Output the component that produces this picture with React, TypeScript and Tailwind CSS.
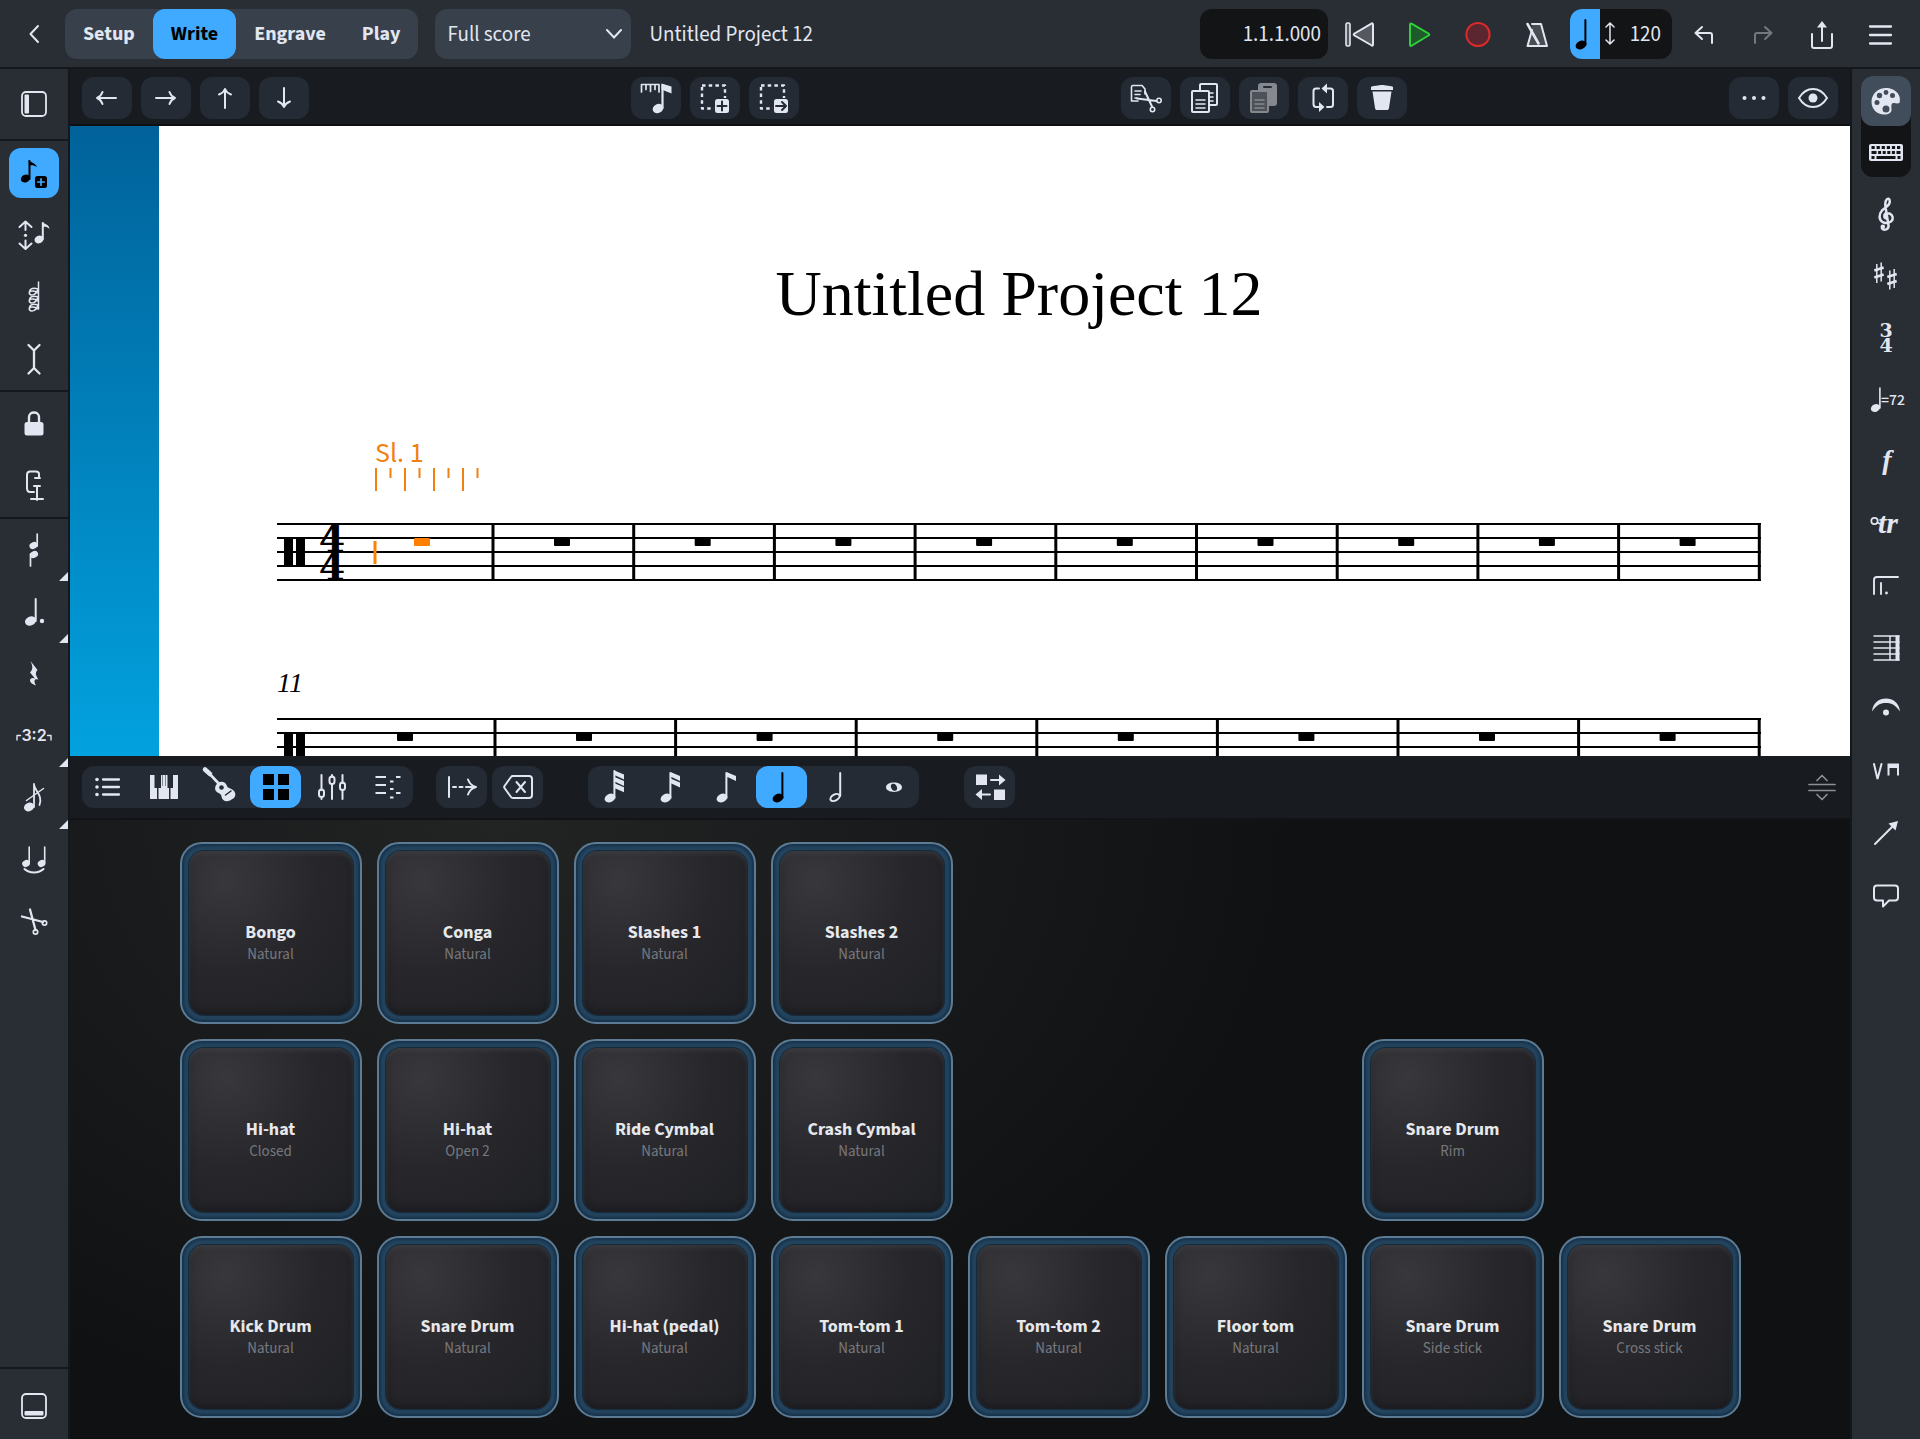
import type { ReactNode } from 'react';
import { clsx } from 'clsx';

type IconProps = { children: ReactNode; size?: string };

// every icon is drawn on a 32px grid
function Icon({ children, size = 'size-8' }: IconProps) {
  return (
    <svg
      viewBox="0 0 32 32"
      className={clsx('shrink-0 overflow-visible', size)}
      fill="none"
      stroke="currentColor"
      strokeWidth="2"
      strokeLinecap="round"
      strokeLinejoin="round"
      aria-hidden="true"
    >
      {children}
    </svg>
  );
}

const solid = { fill: 'currentColor', stroke: 'none' };

function NoteHead({ x, y, rx = 5, ry = 3.9 }: { x: number; y: number; rx?: number; ry?: number }) {
  return <ellipse cx={x} cy={y} rx={rx} ry={ry} transform={`rotate(-24 ${x} ${y})`} {...solid} />;
}

function Duration({ flags }: { flags: number }) {
  return (
    <Icon>
      <NoteHead x={12} y={27} rx={5.6} ry={4.2} />
      <path d={flags === 3 ? 'M16.4 0V27' : 'M16.4 2V27'} />
      {Array.from({ length: flags }, (_, i) => {
        const y = (flags === 3 ? -0.5 : 1) + i * 6.4;
        return <path key={i} d={`M16.4 ${y}L26 ${y + 4}V${y + 9}L16.4 ${y + 4.6}Z`} {...solid} />;
      })}
    </Icon>
  );
}

function Page({ x, y, muted }: { x: number; y: number; muted?: boolean }) {
  return (
    <>
      <rect x={x} y={y} width="17" height="21" rx="1" fill={muted ? '#4d5158' : '#252b35'} />
      <path d={`M${x + 4} ${y + 9}h9M${x + 4} ${y + 13}h9M${x + 4} ${y + 17}h9`} strokeWidth="1.6" />
    </>
  );
}

const icons = {
  back: <Icon><path d="M20 8L12.5 16L20 24" /></Icon>,
  rewind: (
    <Icon>
      <rect x="2" y="5" width="4" height="23" rx="1.5" fill="#55585e" strokeWidth="1.6" />
      <path d="M29 6.5V26.5C29 28 27.8 28 27 27L10.5 17.5C9.5 16.8 9.5 16.2 10.5 15.5L27 5.8C28 5 29 5.2 29 6.5Z" fill="#55585e" />
    </Icon>
  ),
  play: <Icon><path d="M7 6.5V27C7 28.2 8 28.2 9 27.5L25.5 17.5C26.5 16.8 26.5 16.2 25.5 15.5L9 5.8C8 5.2 7 5.3 7 6.5Z" fill="#1f5a2b" stroke="#2fd03a" /></Icon>,
  record: <Icon><circle cx="16" cy="16.5" r="11.6" fill="#5b2630" stroke="#d92b2b" /></Icon>,
  metronome: (
    <Icon>
      <path d="M11 6H20L26 28H6.5L11 12" fill="#484c53" />
      <path d="M6.5 6L17.5 25.5" strokeWidth="2.6" />
    </Icon>
  ),
  undo: <Icon><path d="M14 9L7.5 15L14 21M7.5 15H22C23 15 24 16 24 17V25" /></Icon>,
  redo: <Icon><path d="M18 9L24.5 15L18 21M24.5 15H10C9 15 8 16 8 17V25" /></Icon>,
  share: (
    <Icon>
      <path d="M6 16V28C6 29.5 6.5 30 8 30H24C25.5 30 26 29.5 26 28V16M16 23V8" />
      <path d="M11 9.5L16 3L21 9.5Z" {...solid} />
    </Icon>
  ),
  menu: <Icon><path d="M5 8.5H26M5 17H26M5 25.5H26" strokeWidth="2.3" /></Icon>,
  left: <Icon><path d="M25 16H6M11.5 10C10.5 13 8.5 15 6 16C8.5 17 10.5 19 11.5 22" /></Icon>,
  right: <Icon><path d="M6 16H25M19.5 10C20.5 13 22.5 15 25 16C22.5 17 20.5 19 19.5 22" /></Icon>,
  up: <Icon><path d="M16 26V7M10 12.5C13 11.5 15 9.5 16 7C17 9.5 19 11.5 22 12.5" /></Icon>,
  down: <Icon><path d="M16 6V25M10 19.5C13 20.5 15 22.5 16 25C17 22.5 19 20.5 22 19.5" /></Icon>,
  rhythm: (
    <Icon>
      <path d="M1.5 10V2.5H19V10M6 3V7.5M10.5 3V9.5M15 3V7.5" strokeWidth="1.7" />
      <NoteHead x={18} y={26.5} rx={5.5} ry={4.5} />
      <path d="M22.5 3V26" strokeWidth="2.2" />
      <path d="M21.5 1.5L31.5 4.5V11.5L21.5 7.5Z" {...solid} />
    </Icon>
  ),
  selectMore: (
    <Icon>
      <rect x="3" y="3.5" width="23" height="23" strokeDasharray="3.5 3.2" strokeWidth="2.4" strokeLinecap="butt" />
      <rect x="15" y="16" width="16" height="16" fill="#252b35" stroke="none" />
      <rect x="16" y="17" width="14" height="14" rx="2.5" {...solid} />
      <path d="M18.5 24H27.5M23 19.5V28.5" stroke="#252b35" />
    </Icon>
  ),
  selectEnd: (
    <Icon>
      <rect x="3" y="3.5" width="23" height="23" strokeDasharray="3.5 3.2" strokeWidth="2.4" strokeLinecap="butt" />
      <rect x="15" y="16" width="16" height="16" fill="#252b35" stroke="none" />
      <rect x="16" y="17" width="14" height="14" rx="2.5" {...solid} />
      <path d="M18 24H27.5M24 20L28 24L24 28" stroke="#252b35" />
    </Icon>
  ),
  cutPage: (
    <Icon>
      <path d="M15 12V7L12 3.5H3C2 3.5 1.5 4 1.5 5V19H8M5 9H11M5 12.5H10M5 16H7" strokeWidth="1.6" />
      <path d="M7 16.5L26.5 19M15 9.5L22 24.5" />
      <circle cx="29" cy="18.5" r="2.2" strokeWidth="1.6" />
      <circle cx="22.5" cy="27.5" r="2.2" strokeWidth="1.6" />
    </Icon>
  ),
  copy: <Icon><Page x={11} y={2} /><Page x={3} y={9} /></Icon>,
  paste: (
    <Icon>
      <rect x="11" y="2" width="17" height="21" rx="2" fill="currentColor" />
      <path d="M16 5H23" stroke="#252b35" />
      <Page x={3} y={9} muted />
    </Icon>
  ),
  repeat: (
    <Icon>
      <path d="M12 6.5H9C7.5 6.5 6.5 7.5 6.5 9V22C6.5 23.5 7.5 25 9 25H12M20 25H23.5C25 25 26 24 26 22.5V9C26 7.5 25 6.5 23.5 6.5H19" />
      <path d="M20 1.5V11.5L14.5 6.5ZM12 20V30L17.5 25Z" {...solid} />
    </Icon>
  ),
  trash: <Icon><path d="M5 5.5C5 4.5 6 4.2 8 4L12 3.5C13 2.8 19 2.8 20 3.5L24 4C26 4.2 27 4.5 27 5.5V8H5ZM6.5 9.5H25.5L23 26C22.8 27.5 22 28 21 28H11C10 28 9.2 27.5 9 26Z" {...solid} /></Icon>,
  dots: (
    <Icon>
      <circle cx="6.5" cy="16" r="2" {...solid} /><circle cx="16" cy="16" r="2" {...solid} /><circle cx="25.5" cy="16" r="2" {...solid} />
    </Icon>
  ),
  eye: (
    <Icon>
      <path d="M2 16C6 9.5 11 7 16 7C21 7 26 9.5 30 16C26 22.5 21 25 16 25C11 25 6 22.5 2 16Z" />
      <circle cx="16" cy="16" r="4.5" {...solid} />
    </Icon>
  ),
  sidebar: (
    <Icon>
      <rect x="4" y="4" width="24" height="24" rx="4" strokeWidth="1.8" />
      <rect x="6.5" y="6.5" width="4.5" height="19" rx="1" {...solid} />
    </Icon>
  ),
  drawer: (
    <Icon>
      <rect x="4" y="4" width="24" height="24" rx="4" strokeWidth="1.8" />
      <rect x="6.5" y="21" width="19" height="4.5" rx="1" {...solid} />
    </Icon>
  ),
  noteInput: (
    <Icon>
      <NoteHead x={7.5} y={21.5} rx={4.8} ry={3.8} />
      <path d="M11.5 4V22" />
      <path d="M10.5 3C13 6 17 5.5 19 10C16 8 14 8 11 8.5Z" {...solid} />
      <rect x="17" y="19" width="12" height="12" rx="2.5" {...solid} />
      <path d="M19.8 25H26.2M23 21.8V28.2" stroke="#3faaff" strokeWidth="1.7" />
    </Icon>
  ),
  pitch: (
    <Icon>
      <path d="M7.5 3V11M7.5 29.5V21.5M1.5 8L7.5 2.5L13.5 8M1.5 24.5L7.5 30L13.5 24.5" />
      <circle cx="7.5" cy="16.3" r="1.6" {...solid} />
      <NoteHead x={21} y={20.5} rx={4.6} ry={3.8} />
      <path d="M24.8 4V20" />
      <path d="M24 3C26 5 31 5 31.5 10C29 7.5 27 7.5 24 8Z" {...solid} />
    </Icon>
  ),
  chord: (
    <Icon>
      <path d="M20.5 1V28" strokeWidth="1.5" />
      {[11, 19, 27].map((y) => (
        <path
          key={y}
          d={`M20 ${y - 3}C19 ${y + 2} 13.5 ${y + 5} 11.3 ${y + 1.5}C10.5 ${y - 1} 16 ${y - 2.5} 20 ${y + 1}M11.5 ${y - 1}C13 ${y - 4} 17 ${y - 4} 20 ${y - 3}`}
          strokeWidth="1.5"
        />
      ))}
    </Icon>
  ),
  caret: <Icon><path d="M10.5 2L16 7.5L21.5 2M16 7.5V25M10.5 30.5L16 25L21.5 30.5" strokeWidth="2.3" /></Icon>,
  lock: (
    <Icon>
      <rect x="6.5" y="14" width="19" height="13.5" rx="2.5" {...solid} />
      <path d="M11 15V9C11 3 21 3 21 9V15" strokeWidth="2.4" />
    </Icon>
  ),
  clamp: <Icon><path d="M21 8V4C21 2 20 1.5 18 1.5H12C10 1.5 9 2.5 9 5V18C9 21 10 22 12 22H16M17 8H22M16 16H22M19 17V30M13 29H25" /></Icon>,
  voices: (
    <Icon>
      <NoteHead x={15.5} y={11.5} rx={4.2} ry={3.3} /><path d="M19.2 0V12" strokeWidth="1.7" />
      <NoteHead x={16} y={20.5} rx={4.2} ry={3.3} /><path d="M12.5 20V32" strokeWidth="1.7" />
    </Icon>
  ),
  dotted: (
    <Icon>
      <NoteHead x={12.5} y={25} rx={5.7} ry={4.5} />
      <path d="M17.7 3V25" />
      <circle cx="24" cy="25" r="2.2" {...solid} />
    </Icon>
  ),
  rest: <Icon><path d="M12.5 3L19.5 12C17 15 17.5 17 20.5 21.5C17 20.5 15 22 18 27.5C13 26 10.5 22.5 13 20.5C14.5 19.5 16 20 17 20.5L12 14.5C15 11.5 15 8.5 12.5 3Z" {...solid} /></Icon>,
  tuplet: (
    <Icon>
      <path d="M-1 20V15.5H2.5M29.5 15.5H33V20" strokeWidth="1.4" />
      <text x="16" y="21" textAnchor="middle" {...solid} className="font-['Inter',sans-serif] text-[16px] font-semibold">3:2</text>
    </Icon>
  ),
  grace: (
    <Icon>
      <NoteHead x={11} y={25} rx={5.2} ry={4.2} />
      <path d="M16 2V25M16 3C17 9 25 13 21.5 23" strokeWidth="1.8" />
      <path d="M8.5 18.5L25.5 6.5" strokeWidth="1.5" />
    </Icon>
  ),
  tie: (
    <Icon>
      <NoteHead x={8} y={19.5} rx={3.9} ry={3.4} /><path d="M11.2 3V19" strokeWidth="1.6" />
      <NoteHead x={23.5} y={19.5} rx={3.9} ry={3.4} /><path d="M26.7 3V19" strokeWidth="1.6" />
      <path d="M6.5 25C11 29.5 21 29.5 25.5 25" />
    </Icon>
  ),
  scissors: (
    <Icon>
      <path d="M4 10.5L25 16M12 3.5L17.5 24" strokeWidth="2.3" />
      <circle cx="26.5" cy="17" r="2.2" strokeWidth="1.7" />
      <circle cx="17.5" cy="26" r="2.2" strokeWidth="1.7" />
    </Icon>
  ),
  palette: (
    <Icon>
      <path d="M16 3C8 3 1.5 9 1.5 17C1.5 24 7 29.5 14 29.5C19 29.5 22 27.5 21.5 23.5C21 20 21.5 18 24 18C26 18 27 19 29.5 18C32 10 25 3 16 3Z" {...solid} />
      <g fill="#414d5a" stroke="none">
        <circle cx="16" cy="7.5" r="2.4" /><circle cx="9.5" cy="10.5" r="2.7" /><circle cx="22.5" cy="10.5" r="2.5" />
        <circle cx="7" cy="17.5" r="2.5" /><circle cx="16" cy="24" r="3.5" />
      </g>
    </Icon>
  ),
  keyboard: (
    <Icon>
      <rect x="-1" y="8" width="34" height="17" rx="2" {...solid} />
      <g stroke="#121416" strokeWidth="3" strokeLinecap="butt">
        <path d="M1.5 11.5H30.5" strokeDasharray="3.2 1.9" />
        <path d="M1.5 16.5H30.5" strokeDasharray="5 1.6 3 1.6 3 1.6 3 1.6 3 1.6 4 0" />
        <path d="M1.5 21.5H4.5M6.5 21.5H25.5M27.5 21.5H30.5" />
      </g>
    </Icon>
  ),
  clef: (
    <Icon>
      <path d="M16.5 20.5C13.5 20 13.5 15.5 17 15.2C21.5 15 23.5 18.5 22.5 21.5C21.5 24.5 17 26 13.5 24.5C8.5 22 8.5 16.5 12 12.5C15 9.5 20 7.5 19.8 3.5C19.8 .5 17.5 -.5 16 2.5C14.5 5.5 15.5 9 16 12L18.5 27.5C19 31.5 14 33 12 30.5" strokeWidth="2.5" />
      <circle cx="12.8" cy="28.8" r="2.3" {...solid} />
    </Icon>
  ),
  keySig: (
    <Icon>
      {[[9, 12.5], [22, 19]].map(([x, y]) => (
        <g key={x} strokeLinecap="butt">
          <path d={`M${x - 2.2} ${y - 8.5}V${y + 10.5}M${x + 2.2} ${y - 10}V${y + 9}`} strokeWidth="1.5" />
          <path d={`M${x - 4.7} ${y - 2}L${x + 4.7} ${y - 5}M${x - 4.7} ${y + 5}L${x + 4.7} ${y + 2}`} strokeWidth="2.8" />
        </g>
      ))}
    </Icon>
  ),
  timeSig: (
    <Icon>
      <text {...solid} textAnchor="middle" className="font-['DejaVu_Serif',serif] text-[19px] font-bold">
        <tspan x="16" y="15">3</tspan>
        <tspan x="16" y="30">4</tspan>
      </text>
    </Icon>
  ),
  tempo: (
    <Icon>
      <NoteHead x={5.5} y={24} rx={4.8} ry={3.7} />
      <path d="M9.9 4V24" strokeWidth="1.6" />
      <text x="11" y="21" {...solid} className="font-['Noto_Sans_CJK_SC',sans-serif] text-[14px] font-medium">=72</text>
    </Icon>
  ),
  dynamics: (
    <Icon>
      <text x="17" y="23" textAnchor="middle" {...solid} className="font-['Liberation_Serif',serif] text-[28px] font-bold italic">f</text>
    </Icon>
  ),
  ornament: (
    <Icon>
      <circle cx="4.5" cy="13" r="3.2" strokeWidth="1.7" />
      <path d="M7.5 14.5L10.5 16" strokeWidth="1.7" />
      <text x="18" y="25" textAnchor="middle" {...solid} className="font-['Liberation_Serif',serif] text-[30px] font-bold italic">tr</text>
    </Icon>
  ),
  volta: (
    <Icon>
      <path d="M4 24V10C4 8 5 7 7 7H28M11 13V24" strokeWidth="1.9" />
      <circle cx="16.5" cy="23" r="1.4" {...solid} />
    </Icon>
  ),
  barline: (
    <Icon>
      <path d="M4 4H29M4 10H29M4 16H29M4 22H29M4 28H29M20 4V28" strokeWidth="1.5" />
      <path d="M27.5 3.5V28.5" strokeWidth="4" strokeLinecap="butt" />
    </Icon>
  ),
  fermata: (
    <Icon>
      <path d="M2 17.5C3 8.5 9 4.5 16 4.5C23 4.5 29 8.5 30 17.5C26 11.5 22 9 16 9C10 9 6 11.5 2 17.5Z" {...solid} />
      <circle cx="16" cy="18.5" r="3" {...solid} />
    </Icon>
  ),
  bowing: (
    <Icon>
      <path d="M4 8L7.5 23L11.5 8" strokeLinejoin="miter" />
      <path d="M18.5 19.5V8.5H28V19.5" strokeLinecap="butt" strokeLinejoin="miter" />
      <path d="M18.5 10H28" strokeWidth="4" strokeLinecap="butt" />
    </Icon>
  ),
  line: (
    <Icon>
      <path d="M5 26L23 8" />
      <path d="M28 3L25.5 12.5L18.5 5.5Z" {...solid} />
    </Icon>
  ),
  comment: <Icon><path d="M7 5.5H25C27 5.5 28 6.5 28 8.5V17.5C28 19.5 27 20.5 25 20.5H19L13 26.5V20.5H7C5 20.5 4 19.5 4 17.5V8.5C4 6.5 5 5.5 7 5.5Z" /></Icon>,
  list: (
    <Icon>
      <path d="M11 8.5H27M11 16H27M11 23.5H27" strokeWidth="2.3" />
      {[8.5, 16, 23.5].map((y) => <circle key={y} cx="5" cy={y} r="1.8" {...solid} />)}
    </Icon>
  ),
  piano: <Icon><path d="M2 4H6.5V17H9V28H2ZM10.5 28V17H13V4H14.5V15H18V4H19.5V17H21V28ZM22.5 28V17H25V4H30V28ZM15 4H17.5V16H15Z" {...solid} /></Icon>,
  guitar: (
    <Icon>
      <path d="M3 0L16 14" strokeWidth="2.6" />
      <path d="M1 -1.5L6 3" strokeWidth="4.5" />
      <path d="M14 12C17 9.5 22 11 23 15C23.5 17 26 17 29 19C33 22.5 31.5 27 27.5 28.5C24 31.5 18 30.5 17.5 25.5C17.5 23.5 16 22.5 13.5 21.5C10 19.5 10.5 14.5 14 12Z" {...solid} />
      <circle cx="17.5" cy="16.5" r="2.3" fill="#252b35" stroke="none" />
      <path d="M21.5 24L27 20" stroke="#252b35" strokeWidth="1.5" />
    </Icon>
  ),
  pads: (
    <Icon>
      <path d="M3 3H14V14H3ZM18 3H29V14H18ZM3 18H14V29H3ZM18 18H29V29H18Z" {...solid} />
    </Icon>
  ),
  mixer: (
    <Icon>
      <path d="M5.5 4V19M5.5 26V28M16 4V6M16 13V28M26.5 4V12M26.5 19V28" />
      <rect x="3" y="18.5" width="5" height="7.5" rx="2.5" />
      <rect x="13.5" y="5.5" width="5" height="7.5" rx="2.5" />
      <rect x="24" y="11.5" width="5" height="7.5" rx="2.5" />
    </Icon>
  ),
  steps: (
    <Icon>
      <path d="M3.5 6H14M3.5 14H14M3.5 22H14M24 6H28.5M18 10.5H21.5M24 22H28.5M18 18H21.5M18 26.5H21.5" strokeWidth="2.2" strokeLinecap="butt" />
    </Icon>
  ),
  advance: (
    <Icon>
      <path d="M3 6V26M22 8.5C23.5 12.5 26 15 30 16C26 17 23.5 19.5 22 23.5M21 16H29" />
      <path d="M7 16H21" strokeDasharray="3 3.5" />
    </Icon>
  ),
  backspace: (
    <Icon>
      <path d="M11 5H27C29 5 30 6 30 8V24C30 26 29 27 27 27H11C10 27 9.5 26.8 9 26L2.5 17C2 16.3 2 15.7 2.5 15L9 6C9.5 5.2 10 5 11 5Z" />
      <path d="M14.5 11L23 21M23 11L14.5 21" />
    </Icon>
  ),
  n32: <Duration flags={3} />,
  n16: <Duration flags={2} />,
  n8: <Duration flags={1} />,
  n4: <Duration flags={0} />,
  n2: (
    <Icon>
      <ellipse cx="13" cy="26.5" rx="5" ry="3" transform="rotate(-30 13 26.5)" />
      <path d="M18.2 2V25" />
    </Icon>
  ),
  n1: (
    <Icon>
      <path fillRule="evenodd" d="M16 11.5C20.5 11.5 24 13.5 24 16.3C24 19 20.5 21 16 21C11.5 21 8 19 8 16.3C8 13.5 11.5 11.5 16 11.5ZM14.5 12.8C12.5 13.5 12.5 15.5 13.5 17.5C14.5 19.5 16 20.2 17.5 19.7C19.5 19 19.5 17 18.5 15C17.5 13 16 12.3 14.5 12.8Z" {...solid} />
    </Icon>
  ),
  swap: (
    <Icon>
      <path d="M2 3.5H13V14H2ZM20 18.5H31V29H20ZM25 3.5L31.5 9L25 14.5ZM8 18L1.5 23.5L8 29Z" {...solid} />
      <path d="M17 9H26M6 23.5H16" />
    </Icon>
  ),
  resize: <Icon><path d="M11 9.5L16 4.5L21 9.5M3 13.5H29M3 19.5H29M11 23.5L16 28.5L21 23.5" strokeWidth="1.7" /></Icon>,
};

type IconName = keyof typeof icons;
type Tool = { icon: IconName; label: string; more?: boolean; active?: boolean; muted?: boolean };

const inputTools: Tool[] = [
  { icon: 'noteInput', label: 'Start note input', active: true },
  { icon: 'pitch', label: 'Pitch before duration' },
  { icon: 'chord', label: 'Chords' },
  { icon: 'caret', label: 'Insert' },
];

const lockTools: Tool[] = [
  { icon: 'lock', label: 'Lock durations' },
  { icon: 'clamp', label: 'Force duration' },
];

const noteTools: Tool[] = [
  { icon: 'voices', label: 'Voices', more: true },
  { icon: 'dotted', label: 'Dotted notes', more: true },
  { icon: 'rest', label: 'Rests' },
  { icon: 'tuplet', label: 'Tuplets', more: true },
  { icon: 'grace', label: 'Grace notes', more: true },
  { icon: 'tie', label: 'Tie' },
  { icon: 'scissors', label: 'Scissors' },
];

const notationTools: Tool[] = [
  { icon: 'clef', label: 'Clefs' },
  { icon: 'keySig', label: 'Key signatures' },
  { icon: 'timeSig', label: 'Time signatures' },
  { icon: 'tempo', label: 'Tempo' },
  { icon: 'dynamics', label: 'Dynamics' },
  { icon: 'ornament', label: 'Ornaments' },
  { icon: 'volta', label: 'Repeat structures' },
  { icon: 'barline', label: 'Bars and barlines' },
  { icon: 'fermata', label: 'Holds and pauses' },
  { icon: 'bowing', label: 'Playing techniques' },
  { icon: 'line', label: 'Lines' },
  { icon: 'comment', label: 'Comments' },
];

const editGroups: Tool[][] = [
  [
    { icon: 'left', label: 'Move left' },
    { icon: 'right', label: 'Move right' },
    { icon: 'up', label: 'Move up' },
    { icon: 'down', label: 'Move down' },
  ],
  [
    { icon: 'rhythm', label: 'Rhythmic grid' },
    { icon: 'selectMore', label: 'Select more' },
    { icon: 'selectEnd', label: 'Select to end' },
  ],
  [
    { icon: 'cutPage', label: 'Cut' },
    { icon: 'copy', label: 'Copy' },
    { icon: 'paste', label: 'Paste', muted: true },
    { icon: 'repeat', label: 'Repeat' },
    { icon: 'trash', label: 'Delete' },
  ],
  [
    { icon: 'dots', label: 'More' },
    { icon: 'eye', label: 'View options' },
  ],
];

const panelTools: Tool[] = [
  { icon: 'list', label: 'Properties' },
  { icon: 'piano', label: 'Keyboard' },
  { icon: 'guitar', label: 'Fretboard' },
  { icon: 'pads', label: 'Drum pads', active: true },
  { icon: 'mixer', label: 'Mixer' },
  { icon: 'steps', label: 'Key editor' },
];

const durations: Tool[] = [
  { icon: 'n32', label: 'Thirty-second note' },
  { icon: 'n16', label: 'Sixteenth note' },
  { icon: 'n8', label: 'Eighth note' },
  { icon: 'n4', label: 'Quarter note', active: true },
  { icon: 'n2', label: 'Half note' },
  { icon: 'n1', label: 'Whole note' },
];

const pads: (string[] | null)[] = [
  ['Bongo', 'Natural'], ['Conga', 'Natural'], ['Slashes 1', 'Natural'], ['Slashes 2', 'Natural'], null, null, null, null,
  ['Hi-hat', 'Closed'], ['Hi-hat', 'Open 2'], ['Ride Cymbal', 'Natural'], ['Crash Cymbal', 'Natural'], null, null, ['Snare Drum', 'Rim'], null,
  ['Kick Drum', 'Natural'], ['Snare Drum', 'Natural'], ['Hi-hat (pedal)', 'Natural'], ['Tom-tom 1', 'Natural'],
  ['Tom-tom 2', 'Natural'], ['Floor tom', 'Natural'], ['Snare Drum', 'Side stick'], ['Snare Drum', 'Cross stick'],
];

function HeaderButton({ icon, label, className }: { icon: IconName; label: string; className?: string }) {
  return (
    <button type="button" aria-label={label} className={clsx('flex h-[50px] w-[59px] items-center justify-center', className)}>
      {icons[icon]}
    </button>
  );
}

function Header() {
  return (
    <header className="flex h-[69px] shrink-0 items-center border-b-2 border-[#14171b] bg-[#292d34] pr-[10px]">
      <HeaderButton icon="back" label="Back" className="mr-[2px] ml-1" />
      <nav className="flex h-[50px] rounded-xl bg-[#38404b] text-[20px] font-bold">
        {['Setup', 'Write', 'Engrave', 'Play'].map((mode) => (
          <button
            key={mode}
            type="button"
            className={clsx('rounded-xl px-[18px]', mode === 'Write' && 'bg-[#3faaff] text-black')}
          >
            {mode}
          </button>
        ))}
      </nav>
      <div className="relative ml-[17px] w-[196px]">
        <select aria-label="Layout" className="h-[50px] w-full appearance-none rounded-xl bg-[#38404b] px-3">
          <option>Full score</option>
        </select>
        <svg viewBox="0 0 16 10" className="pointer-events-none absolute top-5 right-[9px] h-[10px] w-4" fill="none" stroke="currentColor" strokeWidth="2" strokeLinecap="round">
          <path d="M1 1L8 8.5L15 1" />
        </svg>
      </div>
      <h2 className="ml-[18px]">Untitled Project 12</h2>

      <output className="mr-[2px] ml-auto flex h-[50px] w-32 items-center justify-end rounded-xl bg-[#121416] pr-[7px]">1.1.1.000</output>
      <div className="flex">
        <HeaderButton icon="rewind" label="Rewind" />
        <HeaderButton icon="play" label="Play" />
        <HeaderButton icon="record" label="Record" />
        <HeaderButton icon="metronome" label="Click" />
      </div>
      <label className="mr-0.5 ml-1 flex h-[50px] w-[102px] items-center overflow-hidden rounded-xl bg-[#121416]">
        <span className="flex h-full w-[30px] items-center justify-center bg-[#3faaff] text-black">{icons.n4}</span>
        <svg viewBox="0 0 10 24" className="ml-[5px] h-6 w-[10px]" fill="none" stroke="currentColor" strokeWidth="1.5" strokeLinecap="round" aria-hidden="true">
          <path d="M5 1V22M1 5L5 1L9 5M1 18L5 22L9 18" />
        </svg>
        <input aria-label="Tempo" defaultValue="120" className="w-[50px] bg-transparent pr-1 text-right" />
      </label>
      <HeaderButton icon="undo" label="Undo" />
      <HeaderButton icon="redo" label="Redo" className="text-[#737880]" />
      <HeaderButton icon="share" label="Share" />
      <HeaderButton icon="menu" label="Menu" />
    </header>
  );
}

function RailItems({ tools }: { tools: Tool[] }) {
  return tools.map((t) => (
    <div key={t.label} className="relative flex h-[62px] items-center justify-center">
      <button
        type="button"
        aria-label={t.label}
        className={clsx('flex size-[50px] items-center justify-center rounded-xl', t.active && 'bg-[#3faaff] text-black')}
      >
        {icons[t.icon]}
      </button>
      {t.more && (
        <svg viewBox="0 0 9 9" className="absolute right-0 bottom-0 size-[9px]" aria-hidden="true">
          <path d="M9 0V9H0Z" fill="currentColor" />
        </svg>
      )}
    </div>
  ));
}

function LeftRail() {
  return (
    <aside className="flex w-[70px] shrink-0 flex-col border-r-2 border-[#14171b] bg-[#292d34]">
      <div className="flex h-[72px] items-center justify-center border-b-2 border-[#14171b]">
        <button type="button" aria-label="Show left panel">{icons.sidebar}</button>
      </div>
      <div className="border-b-2 border-[#14171b] pt-px"><RailItems tools={inputTools} /></div>
      <div className="border-b-2 border-[#14171b] pt-px"><RailItems tools={lockTools} /></div>
      <div><RailItems tools={noteTools} /></div>
      <div className="mt-auto flex h-[72px] items-center justify-center border-t-2 border-[#14171b] pt-1">
        <button type="button" aria-label="Show lower panel">{icons.drawer}</button>
      </div>
    </aside>
  );
}

function RightRail() {
  return (
    <aside className="w-[70px] shrink-0 border-l-2 border-[#14171b] bg-[#292d34] pt-[7px]">
      <div className="mx-auto mb-[6px] flex w-[50px] flex-col rounded-xl bg-[#121416]">
        <button type="button" aria-label="Palette" className="flex h-[50px] items-center justify-center rounded-xl bg-[#414d5a]">
          {icons.palette}
        </button>
        <button type="button" aria-label="Key commands" className="flex h-[51px] items-center justify-center">
          {icons.keyboard}
        </button>
      </div>
      <RailItems tools={notationTools} />
    </aside>
  );
}

function EditToolbar() {
  return (
    <div className="flex h-[57px] shrink-0 items-center justify-between border-b-2 border-[#0e1013] bg-[#181b20] px-3 pt-[3px]">
      {editGroups.map((group, i) => (
        <div key={i} className="flex gap-[9px]">
          {group.map((t) => (
            <button
              key={t.label}
              type="button"
              aria-label={t.label}
              className={clsx('flex h-[42px] w-[50px] items-center justify-center rounded-xl bg-[#252b35]', t.muted && 'text-[#85898f]')}
            >
              {icons[t.icon]}
            </button>
          ))}
        </div>
      ))}
    </div>
  );
}

type StaffProps = { barlines: number[]; rests: number[]; activeRest?: boolean; children?: ReactNode };

// one line of music, five staff lines 14 units apart
function Staff({ barlines, rests, activeRest, children }: StaffProps) {
  return (
    <svg viewBox="0 0 1484 58" className="block w-full overflow-visible" aria-hidden="true">
      {[1, 15, 29, 43, 57].map((y) => <path key={y} d={`M0 ${y}H1484`} stroke="#000" strokeWidth="2" />)}
      <path d="M7 15H16V43H7ZM19 15H28V43H19Z" />
      {barlines.map((x) => <path key={x} d={`M${x} 0V58`} stroke="#000" strokeWidth="3" />)}
      {rests.map((x, i) => (
        <rect key={x} x={x - 8} y="15" width="16" height="8" rx="1" fill={activeRest && i === 0 ? '#ff8000' : '#000'} />
      ))}
      {children}
    </svg>
  );
}

const firstBars = Array.from({ length: 10 }, (_, i) => 216 + i * 140.7);
const secondBars = Array.from({ length: 8 }, (_, i) => 218 + i * 180.6);

function Score() {
  return (
    <section className="flex min-h-0 flex-1 overflow-hidden bg-white text-black">
      <div className="w-[89px] shrink-0 bg-linear-to-b from-[#01629a] to-[#02a2df]" />
      <div className="flex-1 pr-[89px] pl-[118px]">
        <h1 className="pt-[128px] text-center font-['Century_Schoolbook','Liberation_Serif',serif] text-[64px] leading-[80px]">
          Untitled Project 12
        </h1>
        <div className="mt-[104px] pl-[98px] text-[#f08010]">
          <p className="text-[28px] leading-[30px]">Sl. 1</p>
          <svg viewBox="0 0 108 24" className="h-6 w-[108px]" stroke="currentColor" strokeWidth="2" aria-hidden="true">
            <path d="M1 0V23M30 0V23M59 0V23M88 0V23M15.5 0V10M44.5 0V10M73.5 0V10M102.5 0V10" />
          </svg>
        </div>
        <div className="mt-[31px]">
          <Staff barlines={firstBars} rests={[145, ...firstBars.slice(0, 9).map((x) => x + 69)]} activeRest>
            <text textAnchor="middle" className="font-['DejaVu_Serif',serif] text-[38px] font-bold">
              <tspan x="55" y="29">4</tspan>
              <tspan x="55" y="57">4</tspan>
            </text>
            <path d="M98 18V41" stroke="#ff8000" strokeWidth="3" />
          </Staff>
        </div>
        <p className="mt-[84px] font-['Century_Schoolbook','Liberation_Serif',serif] text-[28px] leading-[36px] italic">11</p>
        <div className="mt-[17px]">
          <Staff barlines={secondBars} rests={[128, ...secondBars.slice(0, 7).map((x) => x + 89)]} />
        </div>
      </div>
    </section>
  );
}

function ToolGroup({ tools }: { tools: Tool[] }) {
  return (
    <div className="flex gap-[5px] rounded-xl bg-[#252b35]">
      {tools.map((t) => (
        <button
          key={t.label}
          type="button"
          aria-label={t.label}
          className={clsx('flex h-[42px] w-[51px] items-center justify-center rounded-xl', t.active && 'bg-[#3faaff] text-black')}
        >
          {icons[t.icon]}
        </button>
      ))}
    </div>
  );
}

function PanelToolbar() {
  return (
    <div className="flex h-16 shrink-0 items-center border-b-2 border-[#111316] bg-[#181b20] px-3">
      <ToolGroup tools={panelTools} />
      <div className="ml-[23px] flex gap-[5px]">
        <ToolGroup tools={[{ icon: 'advance', label: 'Advance' }]} />
        <ToolGroup tools={[{ icon: 'backspace', label: 'Delete previous' }]} />
      </div>
      <div className="ml-[45px] flex gap-[45px]">
        <ToolGroup tools={durations} />
        <ToolGroup tools={[{ icon: 'swap', label: 'Swap layout' }]} />
      </div>
      <button type="button" aria-label="Resize panel" className="ml-auto text-[#8b8e93]">{icons.resize}</button>
    </div>
  );
}

function DrumPads() {
  return (
    <section className="grid shrink-0 grid-cols-[repeat(8,182px)] justify-center gap-[15px] bg-[radial-gradient(ellipse_45%_100%_at_24%_0%,#222424,#101113)] pt-[22px] pb-[21px]">
      {pads.map((pad, i) =>
        pad ? (
          <button
            key={i}
            type="button"
            className="aspect-square rounded-[22px] border-2 border-[#5d7b93] bg-[#25455f] p-[7px] shadow-[inset_0_0_3px_2px_#15304a]"
          >
            <span className="flex h-full flex-col items-center justify-center rounded-[15px] bg-[radial-gradient(circle_at_22%_18%,#38383c,#27272b_50%,#1f2024)] pt-[22px] shadow-[0_0_1px_1px_#13283b,inset_0_3px_4px_#45454a80,inset_0_-4px_6px_#15161980]">
              <span className="text-[18px] leading-[22px] font-bold text-[#e6e8ec]">{pad[0]}</span>
              <span className="text-[15px] leading-[22px] text-[#77787d]">{pad[1]}</span>
            </span>
          </button>
        ) : (
          <div key={i} />
        ),
      )}
    </section>
  );
}

export default function App() {
  return (
    <div className="flex h-screen flex-col bg-[#181b20] font-['Source_Sans_3','Noto_Sans_CJK_SC',sans-serif] text-[21px] leading-7 text-[#e1e6f0]">
      <Header />
      <div className="flex min-h-0 flex-1">
        <LeftRail />
        <main className="flex min-w-0 flex-1 flex-col">
          <EditToolbar />
          <Score />
          <PanelToolbar />
          <DrumPads />
        </main>
        <RightRail />
      </div>
    </div>
  );
}
